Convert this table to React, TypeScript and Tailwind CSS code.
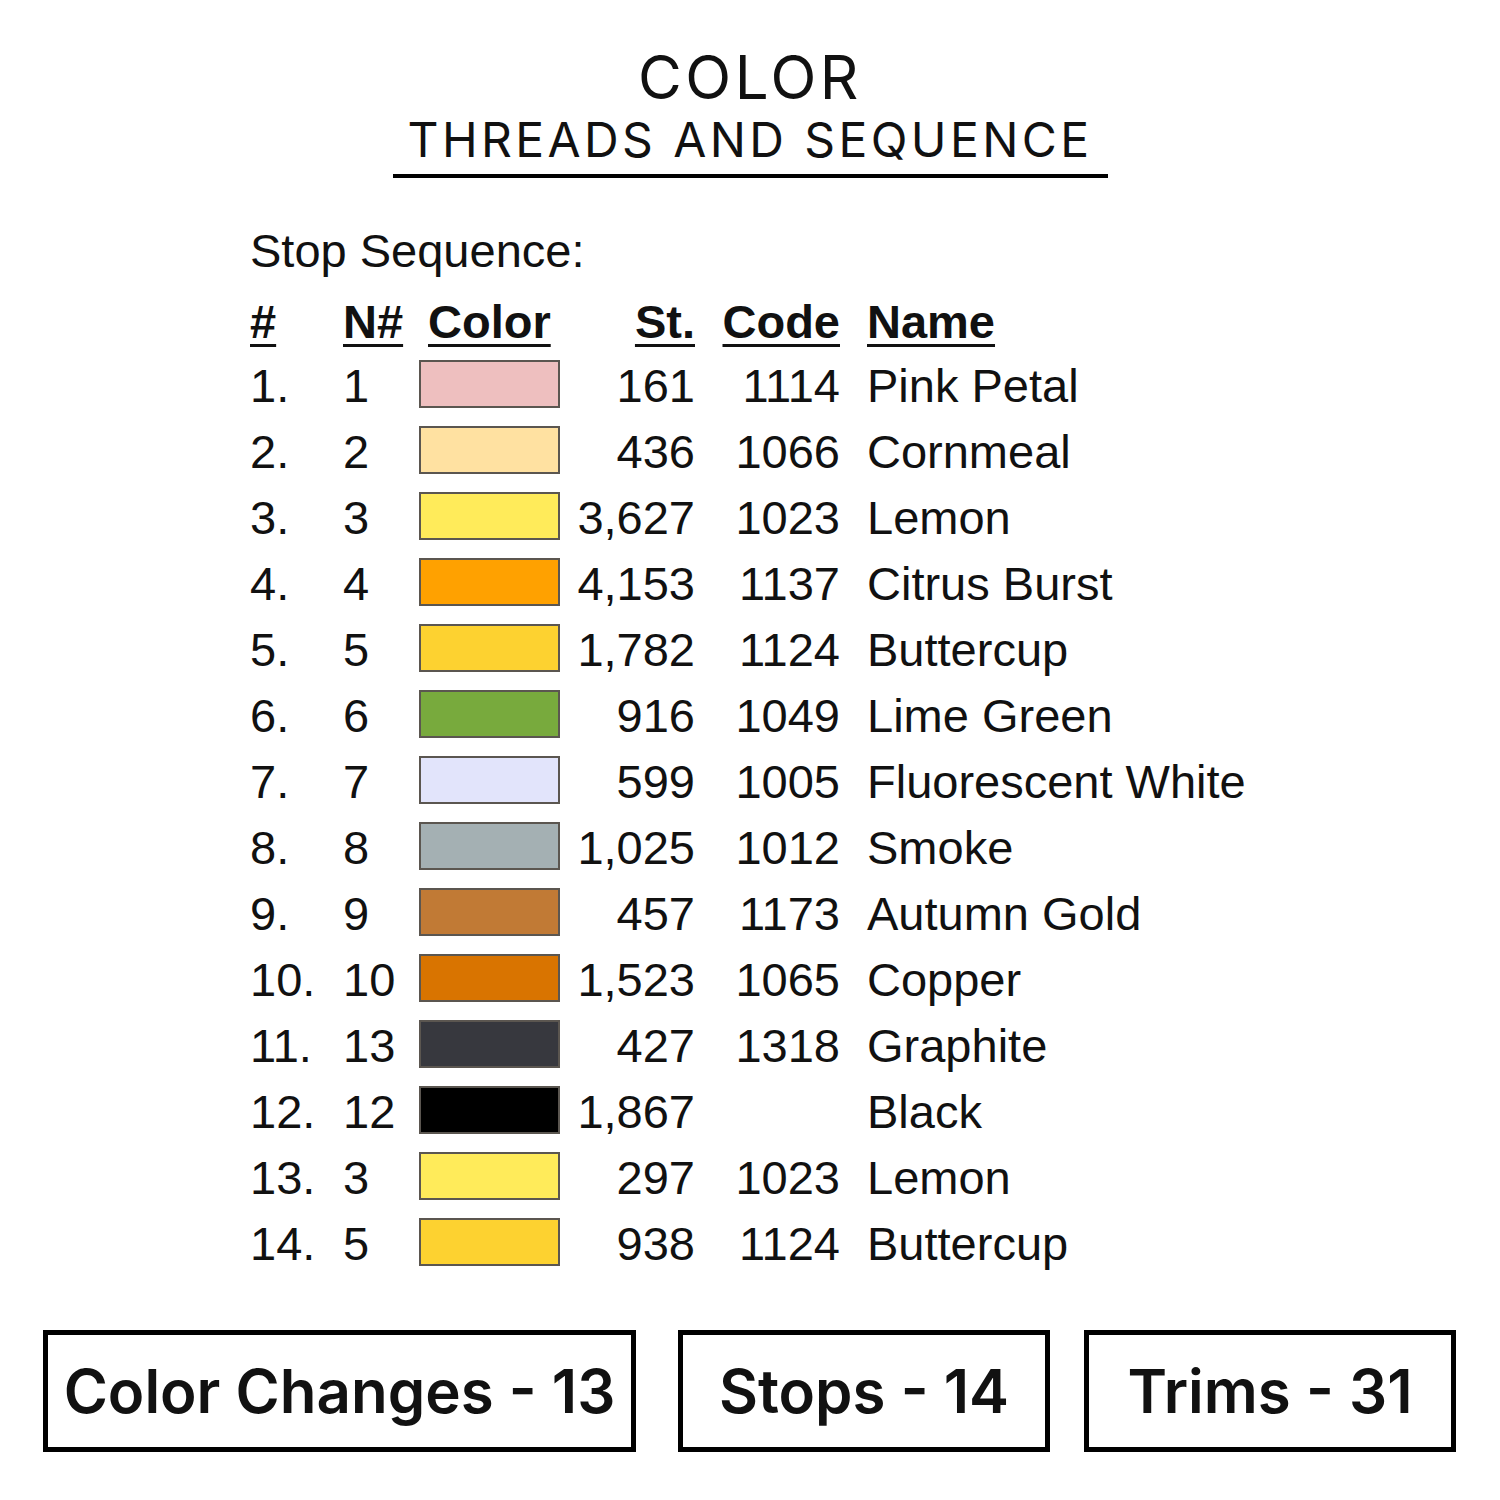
const ROWS = [
  { n: "1", st: "161", code: "1114", name: "Pink Petal", color: "bg-[#eebfbf]" },
  { n: "2", st: "436", code: "1066", name: "Cornmeal", color: "bg-[#ffe1a1]" },
  { n: "3", st: "3,627", code: "1023", name: "Lemon", color: "bg-[#ffeb5a]" },
  { n: "4", st: "4,153", code: "1137", name: "Citrus Burst", color: "bg-[#ffa100]" },
  { n: "5", st: "1,782", code: "1124", name: "Buttercup", color: "bg-[#fdd230]" },
  { n: "6", st: "916", code: "1049", name: "Lime Green", color: "bg-[#78aa3d]" },
  { n: "7", st: "599", code: "1005", name: "Fluorescent White", color: "bg-[#e2e4fb]" },
  { n: "8", st: "1,025", code: "1012", name: "Smoke", color: "bg-[#a4b0b3]" },
  { n: "9", st: "457", code: "1173", name: "Autumn Gold", color: "bg-[#c17a35]" },
  { n: "10", st: "1,523", code: "1065", name: "Copper", color: "bg-[#d97400]" },
  { n: "13", st: "427", code: "1318", name: "Graphite", color: "bg-[#37383e]" },
  { n: "12", st: "1,867", code: "", name: "Black", color: "bg-[#000000]" },
  { n: "3", st: "297", code: "1023", name: "Lemon", color: "bg-[#ffeb5a]" },
  { n: "5", st: "938", code: "1124", name: "Buttercup", color: "bg-[#fdd230]" },
];

const COLS = "grid grid-cols-[93px_76px_141px_135px_145px_1fr]";
const HEAD = "underline decoration-[3px] underline-offset-[6px]";

export default function App() {
  return (
    <div className="min-h-[1500px] w-[1500px] bg-white text-[#111] pt-[47px]">
      {/* ── Title ── */}
      <div className="flex flex-col items-center font-['Inter',sans-serif]">
        <h1 className="text-[60px] leading-[60px] font-normal tracking-[3.5px]">COLOR</h1>
        <div className="mt-[9px] w-[715px] border-b-4 border-black pb-[10px] text-center">
          <h2 className="text-[48px] leading-[48px] font-normal tracking-[3.4px]">
            THREADS AND SEQUENCE
          </h2>
        </div>
      </div>

      {/* ── Stop sequence table ── */}
      <div className="mt-[40px] pl-[250px] font-['Liberation_Sans',Arial,sans-serif] text-[47px]">
        <p className="leading-[66px]">Stop Sequence:</p>

        <div className={`${COLS} mt-[6px] h-[63px] items-center font-bold leading-[63px]`}>
          <span className={HEAD}>#</span>
          <span className={HEAD}>N#</span>
          <span className={`${HEAD} pl-[9px]`}>Color</span>
          <span className={`${HEAD} text-right`}>St.</span>
          <span className={`${HEAD} text-right`}>Code</span>
          <span className={`${HEAD} pl-[27px]`}>Name</span>
        </div>

        {ROWS.map((r, i) => (
          <div key={i} className={`${COLS} h-[66px] items-center leading-[66px]`}>
            <span>{i + 1}.</span>
            <span>{r.n}</span>
            <div className={`mb-1 h-[48px] w-[141px] border-2 border-[#5b5650] ${r.color}`} />
            <span className="text-right">{r.st}</span>
            <span className="text-right">{r.code}</span>
            <span className="pl-[27px] whitespace-nowrap">{r.name}</span>
          </div>
        ))}
      </div>

      {/* ── Summary boxes ── */}
      <div className="mt-[53px] flex px-[43px] font-['Inter',sans-serif] text-[60px] font-semibold">
        <div className="flex h-[122px] w-[593px] items-center justify-center border-[5px] border-black">
          Color Changes - 13
        </div>
        <div className="ml-[42px] flex h-[122px] w-[372px] items-center justify-center border-[5px] border-black">
          Stops - 14
        </div>
        <div className="ml-[34px] flex h-[122px] w-[372px] items-center justify-center border-[5px] border-black">
          Trims - 31
        </div>
      </div>
    </div>
  );
}
